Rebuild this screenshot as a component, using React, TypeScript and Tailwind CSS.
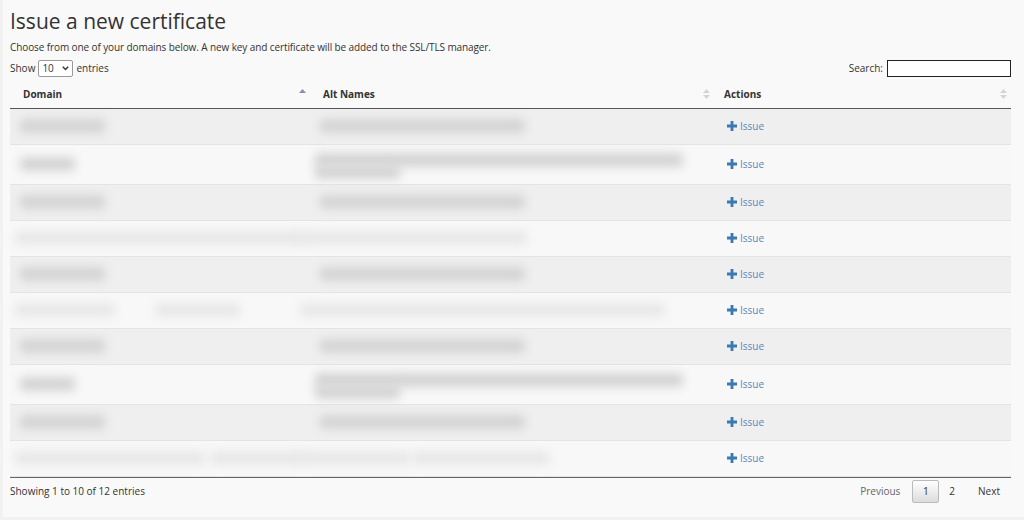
import React from "react";

type Blob = { left: number; width: number; top?: number; height?: number; tone?: string };
type Row = { h: number; domain: Blob[]; alt: Blob[] };

const dark = "bg-[#d4d4d4]";
const light = "bg-[#e8e8e8]";

const rows: Row[] = [
  { h: 35, domain: [{ left: 10, width: 85 }], alt: [{ left: 8, width: 205 }] },
  {
    h: 39,
    domain: [{ left: 10, width: 55 }],
    alt: [
      { left: 3, width: 368, top: 8 },
      { left: 3, width: 85, top: 20 },
    ],
  },
  { h: 35, domain: [{ left: 10, width: 85 }], alt: [{ left: 8, width: 205 }] },
  { h: 35, domain: [{ left: 5, width: 290, tone: light }], alt: [{ left: -12, width: 227, tone: light }] },
  { h: 35, domain: [{ left: 10, width: 85 }], alt: [{ left: 8, width: 205 }] },
  {
    h: 35,
    domain: [
      { left: 5, width: 100, tone: light },
      { left: 145, width: 85, tone: light },
    ],
    alt: [{ left: -12, width: 365, tone: light }],
  },
  { h: 35, domain: [{ left: 10, width: 85 }], alt: [{ left: 8, width: 205 }] },
  {
    h: 39,
    domain: [{ left: 10, width: 55 }],
    alt: [
      { left: 3, width: 368, top: 8 },
      { left: 3, width: 85, top: 20 },
    ],
  },
  { h: 35, domain: [{ left: 10, width: 85 }], alt: [{ left: 8, width: 205 }] },
  {
    h: 35,
    domain: [
      { left: 5, width: 190, tone: light },
      { left: 200, width: 95, tone: light },
    ],
    alt: [
      { left: -12, width: 110, tone: light },
      { left: 100, width: 138, tone: light },
    ],
  },
];

function Blurred({ blobs, h }: { blobs: Blob[]; h: number }) {
  return (
    <div className="relative w-full" style={{ height: h }}>
      {blobs.map((b, i) => (
        <div
          key={i}
          className={`absolute rounded-sm blur-[5px] ${b.tone ?? dark}`}
          style={{ left: b.left, width: b.width, top: b.top ?? (h - 14) / 2, height: b.height ?? 14 }}
        />
      ))}
    </div>
  );
}

function SortBoth() {
  return (
    <svg width="7" height="10" viewBox="0 0 7 10" className="text-[#d4d4d4]">
      <path d="M3.5 0 L7 4 H0 Z" fill="currentColor" />
      <path d="M3.5 10 L7 6 H0 Z" fill="currentColor" />
    </svg>
  );
}

function SortAsc() {
  return (
    <svg width="7" height="10" viewBox="0 0 7 10" className="text-[#8a8ac4]">
      <path d="M3.5 0 L7 4 H0 Z" fill="currentColor" />
    </svg>
  );
}

function Plus() {
  return (
    <svg width="10" height="10" viewBox="0 0 10 10">
      <path d="M3.6 0 H6.4 V3.6 H10 V6.4 H6.4 V10 H3.6 V6.4 H0 V3.6 H3.6 Z" fill="#3b78b4" />
    </svg>
  );
}

export default function App() {
  return (
    <div className="w-[1024px] h-[520px] bg-[#f2f2f2] pl-[3px] font-['Open_Sans',_'Liberation_Sans',_sans-serif] text-[#333]">
      <div className="h-[517px] bg-[#f9f9f9] pl-[7px] pr-[13px] overflow-hidden">
        <h1 className="pt-[7px] text-[21px] leading-[28px] font-normal text-[#333]">Issue a new certificate</h1>
        <p className="mt-[5px] text-[10px] leading-[14px] tracking-[-0.1px]">
          Choose from one of your domains below. A new key and certificate will be added to the SSL/TLS manager.
        </p>

        <div className="mt-[5px] flex items-center justify-between text-[10px] h-[18px]">
          <div className="flex items-center gap-[3px]">
            <span>Show</span>
            <div className="flex items-center justify-between w-[35px] h-[17px] border border-[#999] rounded-[2px] bg-white px-[3px] text-[10px]">
              <span>10</span>
              <svg width="7" height="5" viewBox="0 0 7 5">
                <path d="M0.8 0.8 L3.5 3.6 L6.2 0.8" stroke="#333" strokeWidth="1.4" fill="none" />
              </svg>
            </div>
            <span>entries</span>
          </div>
          <div className="flex items-center gap-[4px]">
            <span>Search:</span>
            <div className="w-[124px] h-[17px] border border-[#222] bg-white" />
          </div>
        </div>

        <table className="mt-[4px] w-[1001px] border-collapse table-fixed text-[10px]">
          <colgroup>
            <col className="w-[302px]" />
            <col className="w-[402px]" />
            <col className="w-[297px]" />
          </colgroup>
          <thead>
            <tr className="h-[27px] border-b border-[#555]">
              <th className="text-left font-bold pl-[13px] pr-[6px]">
                <div className="flex items-center justify-between">
                  <span>Domain</span>
                  <SortAsc />
                </div>
              </th>
              <th className="text-left font-bold pl-[11px] pr-[4px]">
                <div className="flex items-center justify-between">
                  <span>Alt Names</span>
                  <SortBoth />
                </div>
              </th>
              <th className="text-left font-bold pl-[10px] pr-[4px]">
                <div className="flex items-center justify-between">
                  <span>Actions</span>
                  <SortBoth />
                </div>
              </th>
            </tr>
          </thead>
          <tbody>
            {rows.map((r, i) => (
              <tr
                key={i}
                className={`border-b border-[#e4e4e4] ${i % 2 === 0 ? "bg-[#efefef]" : "bg-[#f8f8f8]"}`}
              >
                <td className="p-0">
                  <Blurred blobs={r.domain} h={r.h} />
                </td>
                <td className="p-0">
                  <Blurred blobs={r.alt} h={r.h} />
                </td>
                <td className="p-0 pl-[13px]">
                  <a className="flex items-center gap-[3px] text-[#5a87b8] cursor-pointer">
                    <Plus />
                    <span>Issue</span>
                  </a>
                </td>
              </tr>
            ))}
          </tbody>
        </table>
        <div className="w-[1001px] border-t border-[#666]" />

        <div className="mt-[2px] h-[24px] flex items-center justify-between w-[1001px] text-[10px]">
          <span>Showing 1 to 10 of 12 entries</span>
          <div className="flex items-center">
            <span className="text-[#666] px-[12px]">Previous</span>
            <span className="flex items-center justify-center w-[27px] h-[23px] border border-[#bbb] rounded-[2px] bg-gradient-to-b from-white to-[#dcdcdc]">
              1
            </span>
            <span className="px-[10px]">2</span>
            <span className="pl-[13px] pr-[11px]">Next</span>
          </div>
        </div>
      </div>
    </div>
  );
}
